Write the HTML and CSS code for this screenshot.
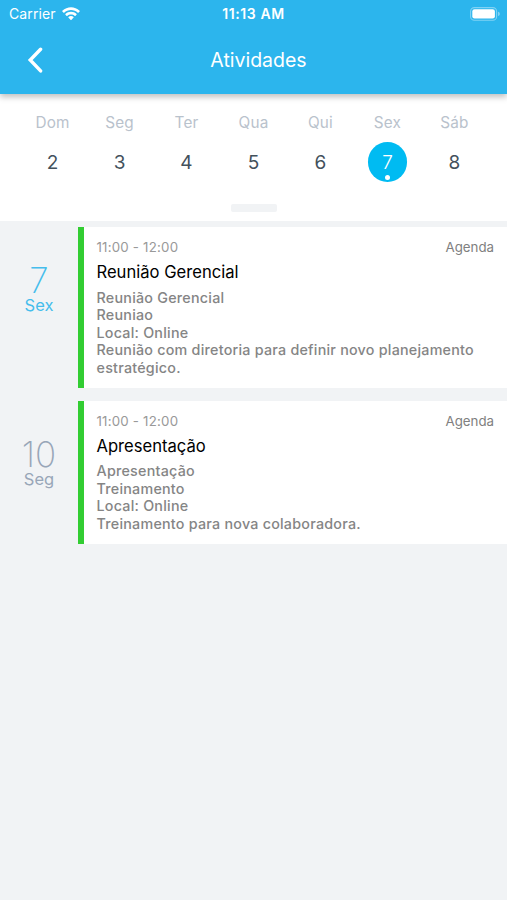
FILE: index.html
```html
<!DOCTYPE html>
<html lang="pt-BR">
<head>
  <meta charset="UTF-8" />
  <meta name="viewport" content="width=device-width, initial-scale=1.0"/>
  <title>Atividades</title>
  <link rel="stylesheet" href="styles.css">
</head>
<body>
  <header class="header">
    <div class="status-bar">
      <div class="carrier">
        <span>Carrier</span>
        <svg class="wifi" width="20" height="15" viewBox="0 0 20 15" fill="#fff">
          <path d="M10 3.1c2.6 0 5 1 6.8 2.7.15.15.4.15.55 0l1.3-1.4c.2-.2.2-.4 0-.6C16.2 1.5 13.2.2 10 .2S3.8 1.5 1.35 3.8c-.2.2-.2.4 0 .6l1.3 1.4c.15.15.4.15.55 0C5 4.1 7.4 3.1 10 3.1z"/>
          <path d="M10 7.5c1.4 0 2.7.5 3.8 1.4.15.15.4.15.55 0l1.3-1.4c.2-.2.2-.4 0-.6C14.1 5.5 12.1 4.7 10 4.7s-4.1.8-5.65 2.2c-.2.2-.2.4 0 .6l1.3 1.4c.15.15.4.15.55 0C7.3 8 8.6 7.5 10 7.5z"/>
          <path d="M12.6 10.6c.2-.2.2-.4 0-.6C11.9 9.4 11 9.1 10 9.1s-1.9.3-2.6.9c-.2.2-.2.4 0 .6l2.3 2.4c.2.2.4.2.6 0z"/>
        </svg>
      </div>
      <span class="clock">11:13 AM</span>
      <div class="battery">
        <svg width="31" height="14" viewBox="0 0 31 14">
          <rect x=".6" y=".6" width="26" height="12.6" rx="3.8" fill="none" stroke="#fff" stroke-opacity=".4" stroke-width="1.1"/>
          <rect x="2.3" y="2.3" width="22.6" height="9.2" rx="2.2" fill="#fff"/>
          <path d="M28.2 4.8v4.2c.9-.4 1.5-1.2 1.5-2.1s-.6-1.7-1.5-2.1z" fill="#fff" fill-opacity=".5"/>
        </svg>
      </div>
    </div>
    <div class="nav-bar">
      <svg class="back" width="16" height="26" viewBox="0 0 16 26" fill="none" stroke="#fff" stroke-width="3.4" stroke-linecap="round">
        <path d="M13.6 2.2L3.2 13l10.4 10.9"/>
      </svg>
      <h1>Atividades</h1>
    </div>
  </header>

  <section class="calendar">
    <div class="week">
      <div class="day"><span class="name">Dom</span><span class="number">2</span></div>
      <div class="day"><span class="name">Seg</span><span class="number">3</span></div>
      <div class="day"><span class="name">Ter</span><span class="number">4</span></div>
      <div class="day"><span class="name">Qua</span><span class="number">5</span></div>
      <div class="day"><span class="name">Qui</span><span class="number">6</span></div>
      <div class="day"><span class="name">Sex</span><span class="number selected">7</span></div>
      <div class="day"><span class="name">Sáb</span><span class="number">8</span></div>
    </div>
    <div class="knob"></div>
  </section>

  <main class="agenda">
    <article class="item">
      <div class="date today">
        <span class="date-number">7</span>
        <span class="date-name">Sex</span>
      </div>
      <div class="card">
        <div class="card-top">
          <span class="time">11:00 - 12:00</span>
          <span class="type">Agenda</span>
        </div>
        <h2>Reunião Gerencial</h2>
        <p>Reunião Gerencial<br>Reuniao<br>Local: Online<br>Reunião com diretoria para definir novo planejamento<br>estratégico.</p>
      </div>
    </article>

    <article class="item">
      <div class="date">
        <span class="date-number">10</span>
        <span class="date-name">Seg</span>
      </div>
      <div class="card">
        <div class="card-top">
          <span class="time">11:00 - 12:00</span>
          <span class="type">Agenda</span>
        </div>
        <h2>Apresentação</h2>
        <p>Apresentação<br>Treinamento<br>Local: Online<br>Treinamento para nova colaboradora.</p>
      </div>
    </article>
  </main>
</body>
</html>
```

FILE: styles.css
```css
* {
  box-sizing: border-box;
}
body {
  margin: 0;
  min-height: 100vh;
  font-family: Inter, 'Liberation Sans', sans-serif;
  background: #f1f3f5;
}

/* header */
.header {
  position: relative;
  z-index: 1;
  height: 94px;
  background: #2cb5ed;
  color: white;
  box-shadow: 0 3px 6px rgba(0, 0, 0, 0.25);
}
.status-bar {
  display: grid;
  grid-template-columns: 1fr auto 1fr;
  align-items: center;
  height: 27px;
  padding: 0 6px 0 9px;
}
.carrier {
  display: flex;
  align-items: center;
  gap: 5px;
  font-size: 14px;
  letter-spacing: 0.1px;
}
.wifi {
  margin-top: 1px;
}
.clock {
  margin-right: 3px;
  font-size: 14px;
  font-weight: 600;
  letter-spacing: 0.6px;
}
.battery {
  display: flex;
  justify-content: flex-end;
}
.nav-bar {
  display: grid;
  grid-template-columns: 60px 1fr 50px;
  align-items: center;
  height: 66px;
}
.back {
  margin-left: 27px;
}
.nav-bar h1 {
  margin: 0;
  text-align: center;
  font-size: 19.5px;
  font-weight: 400;
}

/* week strip */
.calendar {
  height: 127px;
  padding: 18px 19px 0;
  background: white;
}
.week {
  display: grid;
  grid-template-columns: repeat(7, 1fr);
}
.day {
  display: flex;
  flex-direction: column;
  align-items: center;
}
.name {
  height: 20px;
  line-height: 21px;
  font-size: 15.3px;
  letter-spacing: 0.2px;
  color: #b9c2cc;
}
.number {
  display: flex;
  justify-content: center;
  align-items: center;
  width: 39.5px;
  height: 39.5px;
  margin-top: 10.3px;
  border-radius: 50%;
  font-size: 19px;
  color: #43515c;
}
.selected {
  position: relative;
  background: #00bbf2;
  color: white;
  font-weight: 300;
}
.selected::after {
  content: '';
  position: absolute;
  left: 17px;
  bottom: 2px;
  width: 5px;
  height: 5px;
  border-radius: 50%;
  background: white;
}
.knob {
  width: 46px;
  height: 8px;
  margin: 22px auto 0;
  border-radius: 2px;
  background: #f1f3f5;
}

/* agenda list */
.agenda {
  padding-top: 6px;
}
.item {
  display: flex;
  margin-bottom: 13px;
}
.date {
  display: flex;
  flex-direction: column;
  align-items: center;
  width: 78px;
  padding-top: 36px;
  color: #98a6b8;
}
.date.today {
  color: #45bdec;
}
.date-number {
  line-height: 34px;
  font-size: 35px;
  font-weight: 200;
}
.date-name {
  line-height: 17px;
  font-size: 16.5px;
}
.card {
  flex: 1;
  padding: 12px 13px 11.5px 12.5px;
  border-left: 6px solid #32cd32;
  background: white;
}
.card-top {
  display: flex;
  justify-content: space-between;
  height: 17px;
  line-height: 17px;
  font-size: 13.3px;
}
.time {
  letter-spacing: 0.2px;
  color: #999;
}
.type {
  color: #808080;
}
.card h2 {
  margin: 5px 0 5.5px;
  line-height: 22px;
  font-size: 16.6px;
  font-weight: 400;
  color: black;
}
.card p {
  margin: 0;
  line-height: 17.5px;
  font-size: 14.3px;
  font-weight: 500;
  letter-spacing: 0.24px;
  white-space: nowrap;
  color: #858585;
}
```
